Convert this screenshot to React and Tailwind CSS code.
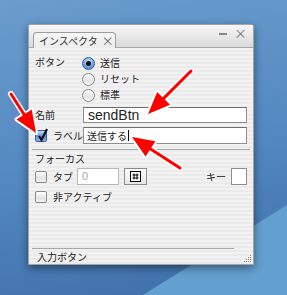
import React from 'react'

const jp = "font-['Noto_Sans_CJK_JP','Noto_Sans',sans-serif]"

function Radio({ on }) {
    return on ? (
        <span className="flex h-[13px] w-[13px] shrink-0 items-center justify-center rounded-full border border-[#3a5f9a] bg-[radial-gradient(circle_at_50%_35%,#d6e9fb,#6d9fdc_60%,#3c72c4)]">
            <span className="h-[5px] w-[5px] rounded-full bg-[#111]" />
        </span>
    ) : (
        <span className="block h-[13px] w-[13px] shrink-0 rounded-full border border-[#8a8a8a] bg-[linear-gradient(#ffffff,#e4e4e4_60%,#f4f4f4)]" />
    )
}

function Check({ on }) {
    return (
        <span
            className={
                'relative block h-[12px] w-[12px] shrink-0 rounded-[2px] border ' +
                (on
                    ? 'border-[#3a5f9a] bg-[linear-gradient(#bcd8f6,#5f95dc_55%,#8ab8ee)]'
                    : 'border-[#8a8a8a] bg-[linear-gradient(#ffffff,#e2e2e2_60%,#f2f2f2)]')
            }
        >
            {on && (
                <svg className="absolute -top-[3px] left-[1px]" width="12" height="14" viewBox="0 0 12 14">
                    <path d="M2 8 L4.5 12 L10 1" fill="none" stroke="#111" strokeWidth="2.2" />
                </svg>
            )}
        </span>
    )
}

function Arrow({ tail, base, tip, c1, c2 }) {
    return (
        <g strokeLinejoin="round" strokeLinecap="round">
            <line x1={tail[0]} y1={tail[1]} x2={base[0]} y2={base[1]} stroke="#fff" strokeWidth="6" />
            <polygon points={`${tip} ${c1} ${c2}`} fill="#fff" stroke="#fff" strokeWidth="4" />
            <line x1={tail[0]} y1={tail[1]} x2={base[0]} y2={base[1]} stroke="#f00" strokeWidth="3" />
            <polygon points={`${tip} ${c1} ${c2}`} fill="#f00" />
        </g>
    )
}

export default function App() {
    return (
        <div className={'relative h-[295px] w-[287px] overflow-hidden bg-[linear-gradient(170deg,#6a9dcd,#5287c0_55%,#3f6ea8)] ' + jp}>
            <svg className="absolute inset-0" width="287" height="295">
                <polygon points="143,295 287,205 287,295" fill="#64a0cf" />
            </svg>

            <div className="relative ml-[28px] mt-[24px] flex h-[241px] w-[226px] flex-col rounded-t-[3px] border border-[#a4a4a4] bg-[repeating-linear-gradient(0deg,#ebebeb_0px,#ebebeb_2px,#f2f2f2_2px,#f2f2f2_4px)] shadow-[0_3px_8px_rgba(0,0,0,0.45)]">
                <div className="relative flex h-[23px] shrink-0 items-end border-b border-[#a8a8a8] bg-[linear-gradient(#f7f7f7,#dadada)] pl-[4px]">
                    <div className="-mb-px flex h-[16px] w-[83px] items-center whitespace-nowrap rounded-t-[4px] border border-b-0 border-[#9c9c9c] bg-[linear-gradient(#f6f6f6,#ececec)] pl-[5px] text-[10px] leading-none text-[#333]">
                        インスペクタ
                        <span className="ml-[4px] text-[12px] text-[#666]">×</span>
                    </div>
                    <div className="absolute right-[6px] top-[1px] flex items-center gap-[7px] text-[#777]">
                        <span className="mt-[2px] block h-[2px] w-[8px] bg-[#888]" />
                        <span className="text-[13px] leading-none">×</span>
                    </div>
                </div>

                <div className="flex flex-1 flex-col whitespace-nowrap pl-[6px] pr-[6px] text-[10px] leading-none text-[#222]">
                    <div className="mt-[7px] flex">
                        <div className="w-[47px] pt-[2px]">ボタン</div>
                        <div className="flex flex-col">
                            {[
                                ['送信', true],
                                ['リセット', false],
                                ['標準', false],
                            ].map(([t, on]) => (
                                <div key={t} className="flex h-[16px] items-center gap-[5px]">
                                    <Radio on={on} />
                                    <span>{t}</span>
                                </div>
                            ))}
                        </div>
                    </div>

                    <div className="mt-[4px] flex items-center">
                        <div className="w-[48px]">名前</div>
                        <div className="flex h-[16px] flex-1 items-center border border-[#8e8e8e] border-t-[#6e6e6e] bg-white pl-[4px] font-['Liberation_Sans',sans-serif] text-[14px] text-[#222]">
                            sendBtn
                        </div>
                    </div>

                    <div className="mt-[4px] flex items-center">
                        <Check on />
                        <div className="ml-[6px] w-[30px]">ラベル</div>
                        <div className="flex h-[17px] flex-1 items-center border border-[#8e8e8e] border-t-[#6e6e6e] bg-white pl-[3px] text-[10px]">
                            送信する<span className="ml-px block h-[11px] w-px bg-black" />
                        </div>
                    </div>

                    <div className="-mx-[3px] mt-[5px] h-px bg-[#a8a8a8]" />

                    <div className="mt-[4px]">フォーカス</div>

                    <div className="mt-[4px] flex items-center">
                        <Check />
                        <span className="ml-[6px] w-[24px]">タブ</span>
                        <div className="flex h-[17px] w-[42px] items-center border border-[#b8b8b8] bg-white pl-[4px] font-['Liberation_Sans',sans-serif] text-[11px] text-[#aaa]">
                            0
                        </div>
                        <div className="ml-[5px] flex h-[17px] w-[23px] items-center justify-center border border-[#8c8c8c] bg-[linear-gradient(#ffffff,#e6e6e6)]">
                            <svg width="11" height="11" viewBox="0 0 11 11">
                                <rect x="0.5" y="0.5" width="10" height="10" fill="#fff" stroke="#000" />
                                <path d="M4 2.5 V8.5 M7 2.5 V8.5 M2.5 4 H8.5 M2.5 7 H8.5" stroke="#000" />
                            </svg>
                        </div>
                        <span className="ml-auto mr-[5px]">キー</span>
                        <div className="h-[17px] w-[16px] border border-[#8e8e8e] bg-white" />
                    </div>

                    <div className="mt-[6px] flex items-center">
                        <Check />
                        <span className="ml-[6px]">非アクティブ</span>
                    </div>

                    <div className="mt-auto -ml-[3px] mr-[13px] h-px bg-[#a8a8a8]" />
                    <div className="flex h-[15px] items-center pl-[2px]">入力ボタン</div>
                </div>

                <svg className="absolute bottom-[1px] right-[1px]" width="10" height="10" viewBox="0 0 10 10">
                    {[
                        [8, 2], [6, 4], [8, 4], [4, 6], [6, 6], [8, 6], [2, 8], [4, 8], [6, 8], [8, 8],
                    ].map(([x, y]) => (
                        <rect key={x + '-' + y} x={x} y={y} width="1" height="1" fill="#888" />
                    ))}
                </svg>
            </div>

            <svg className="absolute inset-0" width="287" height="295">
                <Arrow tail={[191, 71]} base={[163.6, 98.4]} tip={[148, 114]} c1={[170, 104.8]} c2={[157.2, 92]} />
                <Arrow tail={[11, 94]} base={[24.1, 114.5]} tip={[36, 133]} c1={[16.5, 119.4]} c2={[31.7, 109.6]} />
                <Arrow tail={[180, 168]} base={[150.5, 148.9]} tip={[132, 137]} c1={[155.4, 141.3]} c2={[145.6, 156.5]} />
            </svg>
        </div>
    )
}
